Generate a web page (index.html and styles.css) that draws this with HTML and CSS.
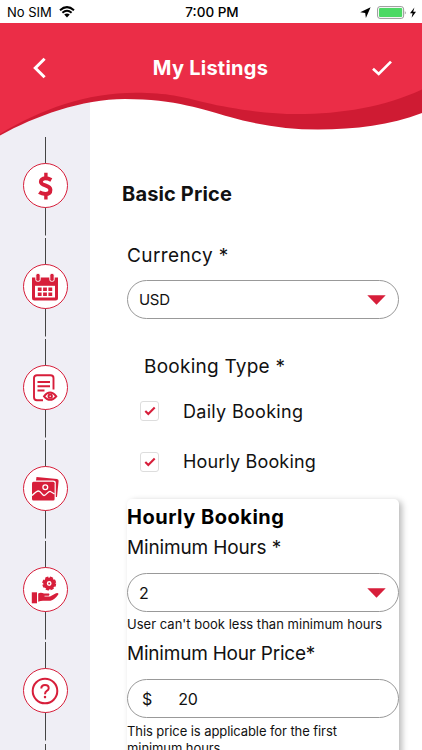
FILE: index.html
```html
<!DOCTYPE html>
<html lang="en">
  <head>
    <meta charset="utf-8">
    <meta name="viewport" content="width=device-width, initial-scale=1">
    <title>My Listings</title>
    <link rel="stylesheet" href="styles.css">
  </head>
  <body>
    <div class="statusbar">
      <div class="carrier">
        <span>No SIM</span>
        <svg width="16" height="12" viewBox="0 0 16 12">
          <path d="M1 4.2 Q8 -2 15 4.2 M3.4 6.7 Q8 2.7 12.6 6.7" fill="none" stroke="#000" stroke-width="2"/>
          <path d="M5.2 8.6 Q8 6.4 10.8 8.6 L8 11.5 Z"/>
        </svg>
      </div>
      <div class="clock">7:00 PM</div>
      <div class="power">
        <svg width="11" height="11" viewBox="0 0 11 11"><path d="M10.6 0.2 L5.9 11 L5.2 5.9 L0.2 5.2 Z"/></svg>
        <svg width="40" height="13" viewBox="0 0 40 13">
          <rect x="0.6" y="0.6" width="26" height="11.8" rx="2.4" fill="#fff" stroke="#999"/>
          <rect x="2" y="2" width="23.2" height="9" rx="1" fill="#4cd964"/>
          <path d="M27.8 4.5 Q29.6 6.5 27.8 8.5 Z" fill="#999"/>
          <path d="M37.4 1.5 L33 7.3 H35.6 L34.6 11.8 L39 5.7 H36.2 Z"/>
        </svg>
      </div>
    </div>

    <header class="header">
      <svg class="wave" width="422" height="113" viewBox="0 23 422 113">
        <path fill="#cf1b33" d="M0 23 H422 V113 C390 125 356 129.5 318 129.5 C288 129.5 258 125 230 117 C205 110 175 99 125 99 C82 99 35 116 0 135.5 Z"/>
        <path fill="#eb2d47" d="M0 23 H422 V89.5 C384 107 342 114 297 114 C268 114 232 109 205 102.5 C182 97 168 92.8 136 92.8 C86 92.8 42 109 0 134 Z"/>
      </svg>
      <div class="navbar">
        <svg width="14" height="22" viewBox="0 0 14 22"><path d="M12.6 1.8 L3.3 11 L12.6 20.2" fill="none" stroke="#fff" stroke-width="3"/></svg>
        <h1 class="title">My Listings</h1>
        <svg width="20" height="16" viewBox="0 0 20 16"><path d="M1 8.8 L6.7 14 L19 1.6" fill="none" stroke="#fff" stroke-width="2.7"/></svg>
      </div>
    </header>

    <div class="page">
      <nav class="steps">
        <div class="step">
          <div class="circle">
            <svg width="28" height="28" viewBox="0 0 28 28">
              <path d="M20.3 8 C18.3 6.9 16.6 6.3 14.4 6.3 C11.2 6.3 9.8 8 9.9 10 C10.1 14.2 19.3 12.6 19.4 17.7 C19.4 20.3 17.6 22 14.4 22 C12.2 22 10 21.4 8.2 20.2" fill="none" stroke="#d71e3a" stroke-width="4"/>
              <path d="M14.9 0.8 V7 M14.9 21 V27.5" stroke="#d71e3a" stroke-width="3.4"/>
            </svg>
          </div>
        </div>
        <div class="step">
          <div class="circle">
            <svg width="28" height="28" viewBox="0 0 28 28">
              <path d="M1 4.5 H27 V25 Q27 27.5 24.5 27.5 H3.5 Q1 27.5 1 25 Z" fill="#d71e3a"/>
              <path d="M4 12.8 H24 V24.5 H4 Z" fill="#fff"/>
              <rect x="4.8" y="0.5" width="4.4" height="7.8" rx="1.6" fill="#d71e3a" stroke="#fff"/>
              <rect x="18.8" y="0.5" width="4.4" height="7.8" rx="1.6" fill="#d71e3a" stroke="#fff"/>
              <path d="M6.8 16.2 H21.2 M6.8 21.2 H21.2" stroke="#d71e3a" stroke-width="3.6" stroke-dasharray="3.8 1.5"/>
            </svg>
          </div>
        </div>
        <div class="step">
          <div class="circle">
            <svg width="28" height="28" viewBox="0 0 28 28" fill="none" stroke="#d71e3a" stroke-width="1.9">
              <path d="M12 26.3 H6 Q3 26.3 3 23.3 V4 Q3 1.3 6 1.3 H19.5 Q22.5 1.3 22.5 4 V15.5"/>
              <path d="M6.5 8 H19 M6.5 12.3 H19 M6.5 16.5 H13.5"/>
              <path d="M13 22.3 Q19 14.7 25.3 22.3 Q19 29.5 13 22.3 Z"/>
              <circle cx="19.2" cy="22.2" r="1.7"/>
            </svg>
          </div>
        </div>
        <div class="step">
          <div class="circle">
            <svg width="28" height="28" viewBox="0 0 28 28">
              <path d="M5.5 2 L26 4 Q27.8 4.3 27.6 6 L26 22 L24.8 22 V7.8 Q24.8 5.5 22 5.5 H5 Z" fill="#d71e3a"/>
              <rect x="1" y="6.8" width="22.6" height="18.7" rx="1.5" fill="#d71e3a"/>
              <circle cx="14.3" cy="12.3" r="2.4" fill="none" stroke="#fff" stroke-width="1.3"/>
              <path d="M1 20.5 Q5.5 16 7.5 16 C10 16 11 20.5 13 20.5 C15 20.5 17 16.3 19 16.3 L23.6 19" fill="none" stroke="#fff" stroke-width="1.3"/>
            </svg>
          </div>
        </div>
        <div class="step">
          <div class="circle">
            <svg width="28" height="28" viewBox="0 0 28 28">
              <circle cx="18.2" cy="7.5" r="4.2" fill="none" stroke="#d71e3a" stroke-width="3.6"/>
              <circle cx="18.2" cy="7.5" r="6.2" fill="none" stroke="#d71e3a" stroke-width="1.6" stroke-dasharray="3.2 1.67"/>
              <circle cx="18.2" cy="7.5" r="1" fill="#d71e3a"/>
              <path d="M0.8 16.3 H6 V27.3 H0.8 Z" fill="#d71e3a"/>
              <path d="M7.2 17.4 Q10 16 13 17.6 H18 Q19.2 18.7 17.8 19.7 H13.5 V20.5 H19 L25 17.3 Q28 16.2 27.3 18.5 Q23.5 24 19.5 24.7 H12 Q9.5 24.8 7.2 25.8 Z" fill="#d71e3a"/>
            </svg>
          </div>
        </div>
        <div class="step">
          <div class="circle">
            <svg width="28" height="28" viewBox="0 0 28 28" fill="none" stroke="#d71e3a">
              <circle cx="14" cy="14" r="12.3" stroke-width="2"/>
              <path d="M10.3 11.6 Q10.3 8 14 8 Q17.7 8 17.7 11.2 Q17.7 12.8 15.8 13.9 Q14 15 14 17.2" stroke-width="2"/>
              <path d="M14 18.9 V21.2" stroke-width="2.2"/>
            </svg>
          </div>
        </div>
        <div class="step"></div>
      </nav>

      <main class="content">
        <h2 class="section">Basic Price</h2>
        <div class="field">
          <label class="label currency">Currency *</label>
          <div class="input">
            <span class="usd">USD</span>
            <svg class="arrow" width="19" height="10" viewBox="0 0 19 10"><path d="M0.3 0.3 H18.7 L9.5 9.7 Z" fill="#d71e3a"/></svg>
          </div>
        </div>

        <div class="booking">
          <div class="label type">Booking Type *</div>
          <div class="option">
            <span class="checkbox"><svg width="12" height="10" viewBox="0 0 12 10"><path d="M1.3 5 L4.3 8 L10.7 1.6" fill="none" stroke="#d71e3a" stroke-width="2.1"/></svg></span>
            <span class="daily">Daily Booking</span>
          </div>
          <div class="option">
            <span class="checkbox"><svg width="12" height="10" viewBox="0 0 12 10"><path d="M1.3 5 L4.3 8 L10.7 1.6" fill="none" stroke="#d71e3a" stroke-width="2.1"/></svg></span>
            <span class="hourly">Hourly Booking</span>
          </div>
        </div>

        <div class="card">
          <h3 class="card-title">Hourly Booking</h3>
          <label class="label hours">Minimum Hours *</label>
          <div class="input">
            <span>2</span>
            <svg class="arrow" width="19" height="10" viewBox="0 0 19 10"><path d="M0.3 0.3 H18.7 L9.5 9.7 Z" fill="#d71e3a"/></svg>
          </div>
          <p class="hint">User can't book less than minimum hours</p>
          <label class="label price">Minimum Hour Price*</label>
          <div class="input">
            <span class="dollar">$</span>
            <span class="amount">20</span>
          </div>
          <p class="hint note">This price is applicable for the first<br>minimum hours</p>
        </div>
      </main>
    </div>
  </body>
</html>
```
FILE: styles.css
```css
* {
  box-sizing: border-box;
}
body {
  margin: 0;
  height: 750px;
  overflow: hidden;
  display: flex;
  flex-direction: column;
  background: #fff;
  color: #111;
  font-family: Inter, "Liberation Sans", sans-serif;
}
svg {
  display: block;
  flex: none;
}
h1, h2, h3, p {
  margin: 0;
}
.statusbar {
  height: 23px;
  flex: none;
  display: grid;
  grid-template-columns: 1fr auto 1fr;
  align-items: center;
  padding: 1px 5px 0 7px;
  font-size: 13px;
  color: #000;
}
.carrier {
  display: flex;
  align-items: center;
  gap: 7px;
}
.clock {
  font-weight: 500;
  font-size: 13.5px;
}
.power {
  display: flex;
  align-items: center;
  justify-content: flex-end;
  gap: 6px;
}
.header {
  height: 90px;
  flex: none;
  position: relative;
}
.wave {
  position: absolute;
  top: 0; left: 0;
  z-index: 1;
}
.navbar {
  position: relative;
  z-index: 2;
  height: 90px;
  display: flex;
  align-items: center;
  justify-content: space-between;
  padding: 0 30px 0 32px;
}
.title {
  margin-left: 3px;
  font-size: 20px;
  font-weight: 700;
  letter-spacing: 0.25px;
  color: #fff;
}
.page {
  flex: 1;
  min-height: 0;
  display: flex;
  margin-top: -23px;
}
.steps {
  width: 90px;
  flex: none;
  padding-top: 47px;
  background: #efeef5;
  overflow: hidden;
}
.step {
  height: 101.1px;
  padding-top: 26px;
  display: flex;
  justify-content: center;
  align-items: flex-start;
  background: linear-gradient(#444, #444) 44.5px 0 / 1.3px 98.5px no-repeat;
}
.circle {
  width: 45px;
  height: 45px;
  border: 1px solid #d71e3a;
  border-radius: 50%;
  background: #fff;
  display: flex;
  align-items: center;
  justify-content: center;
}
.content {
  flex: 1;
  padding: 90px 23px 0 37px;
  overflow: hidden;
}
.section {
  margin-left: -5px;
  font-size: 20px;
  line-height: 28px;
  font-weight: 650;
  letter-spacing: 0.15px;
}
.label {
  display: block;
  font-size: 19px;
  line-height: 28px;
}
.field {
  margin-top: 34px;
}
.currency {
  letter-spacing: 0.4px;
}
.input {
  width: 272px;
  height: 39px;
  margin-top: 10px;
  padding: 0 12px 0 11px;
  border: 1px solid #999;
  border-radius: 20px;
  display: flex;
  align-items: center;
  font-size: 16px;
}
.usd {
  font-size: 15px;
  letter-spacing: -0.3px;
}
.arrow {
  margin-left: auto;
}
.booking {
  margin: 34px 0 0 13px;
}
.type {
  margin-left: 4px;
  letter-spacing: 0.25px;
}
.option {
  height: 50.5px;
  display: flex;
  align-items: center;
  gap: 24px;
  font-size: 18px;
}
.type + .option {
  margin-top: 5px;
}
.daily {
  letter-spacing: 0.3px;
}
.hourly {
  letter-spacing: 0.15px;
}
.checkbox {
  width: 19px;
  height: 20px;
  border: 1px solid #ddd;
  border-radius: 3px;
  display: flex;
  align-items: center;
  justify-content: center;
}
.card {
  width: 272px;
  height: 290px;
  margin-top: 12px;
  padding-top: 4px;
  border-radius: 5px;
  box-shadow: 3px 2px 6px rgba(0, 0, 0, 0.28);
}
.card-title {
  font-size: 20px;
  line-height: 28px;
  font-weight: 700;
  letter-spacing: 0.5px;
  color: #000;
}
.hours {
  margin-top: 3px;
  letter-spacing: -0.15px;
}
.card .input {
  margin-top: 11px;
}
.hint {
  font-size: 13px;
  line-height: 17px;
  margin-top: 4px;
  letter-spacing: 0.02px;
}
.price {
  margin-top: 7px;
  letter-spacing: -0.22px;
}
.hint.note {
  margin-top: 5px;
  letter-spacing: -0.08px;
}
.dollar {
  margin-left: 3px;
}
.amount {
  margin-left: 26px;
  letter-spacing: -0.3px;
}
```
